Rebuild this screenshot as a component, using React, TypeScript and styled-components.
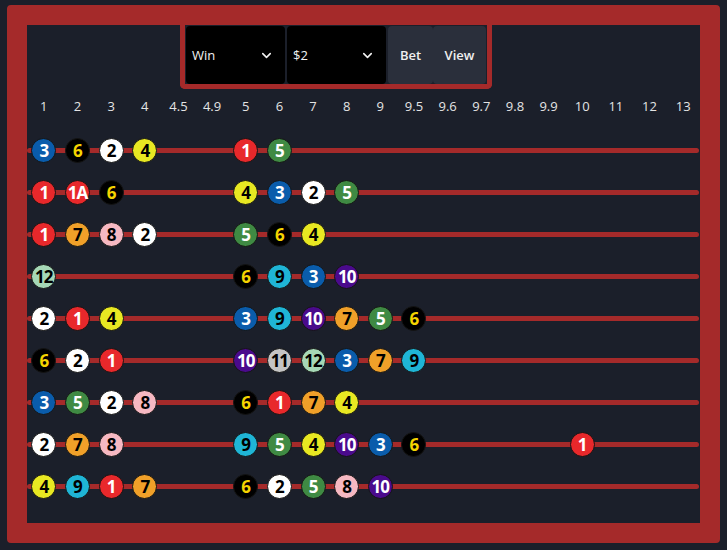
import React from 'react';
import styled, { createGlobalStyle } from 'styled-components';
import { ChevronDown } from 'lucide-react';

const GlobalStyle = createGlobalStyle`
  body {
    margin: 0;
    background: #1b1f2a;
    font-family: "Open Sans", "Noto Sans", sans-serif;
    color: #e6e6e6;
  }
`

const RED = '#a52a2a';

type BallStyle = { bg: string; fg: string };

const ballColors: Record<string, BallStyle> = {
  '1': { bg: '#e8282b', fg: '#ffffff' },
  '1A': { bg: '#e8282b', fg: '#ffffff' },
  '2': { bg: '#ffffff', fg: '#000000' },
  '3': { bg: '#0a5cab', fg: '#ffffff' },
  '4': { bg: '#e8e822', fg: '#000000' },
  '5': { bg: '#3f8a43', fg: '#ffffff' },
  '6': { bg: '#000000', fg: '#f5d400' },
  '7': { bg: '#f0a029', fg: '#000000' },
  '8': { bg: '#f6b8c2', fg: '#000000' },
  '9': { bg: '#1fb5d6', fg: '#000000' },
  '10': { bg: '#4a0a8c', fg: '#ffffff' },
  '11': { bg: '#c4c4c4', fg: '#000000' },
  '12': { bg: '#a6d8b6', fg: '#000000' },
};

const columns = ['1', '2', '3', '4', '4.5', '4.9', '5', '6', '7', '8', '9', '9.5', '9.6', '9.7', '9.8', '9.9', '10', '11', '12', '13'];

// each row: one entry per column, '' = empty slot
const rows: string[][] = [
  ['3', '6', '2', '4', '', '', '1', '5'],
  ['1', '1A', '6', '', '', '', '4', '3', '2', '5'],
  ['1', '7', '8', '2', '', '', '5', '6', '4'],
  ['12', '', '', '', '', '', '6', '9', '3', '10'],
  ['2', '1', '4', '', '', '', '3', '9', '10', '7', '5', '6'],
  ['6', '2', '1', '', '', '', '10', '11', '12', '3', '7', '9'],
  ['3', '5', '2', '8', '', '', '6', '1', '7', '4'],
  ['2', '7', '8', '', '', '', '9', '5', '4', '10', '3', '6', '', '', '', '', '1'],
  ['4', '9', '1', '7', '', '', '6', '2', '5', '8', '10'],
];

const Frame = styled.div`
  box-sizing: border-box;
  width: 713px;
  height: 538px;
  margin: 5px 0 0 7px;
  border: 20px solid ${RED};
  border-radius: 4px;
  display: flex;
  flex-direction: column;
`

const Toolbar = styled.div`
  display: flex;
  align-self: flex-start;
  margin-left: 153px;
  padding: 1px 1px 0 1px;
  border: 5px solid ${RED};
  border-top: 0;
  border-radius: 0 0 5px 5px;
`

const Select = styled.div`
  box-sizing: border-box;
  width: 99px;
  height: 58px;
  margin-right: 2px;
  padding: 0 11px 0 6px;
  background: #000;
  border-radius: 4px;
  display: flex;
  align-items: center;
  justify-content: space-between;
  font-size: 13px;
  color: #f2f2f2;
`

const Button = styled.div<{ $w: number }>`
  width: ${p => p.$w}px;
  height: 58px;
  background: #2a2f3b;
  border-radius: 4px;
  display: flex;
  align-items: center;
  justify-content: center;
  font-size: 13px;
  font-weight: 600;
  color: #f0f0f0;
`

const Grid = styled.div`
  display: grid;
  grid-template-columns: repeat(20, 1fr);
  align-items: center;
  justify-items: center;
`

const Header = styled(Grid)`
  margin-top: 7px;
  height: 20px;
  font-size: 13px;
  color: #e4e4e4;
`

const Rows = styled.div`
  margin-top: 13px;
  display: flex;
  flex-direction: column;
`

const Row = styled(Grid)`
  position: relative;
  height: 42px;

  &::before {
    content: '';
    position: absolute;
    left: 0;
    right: 1px;
    top: 19px;
    height: 5px;
    border-radius: 3px;
    background: ${RED};
  }
`

const Ball = styled.div<{ $bg: string; $fg: string }>`
  position: relative;
  box-sizing: border-box;
  width: 25px;
  height: 25px;
  border-radius: 50%;
  border: 1px solid #141414;
  background: ${p => p.$bg};
  color: ${p => p.$fg};
  display: flex;
  align-items: center;
  justify-content: center;
  font-size: 17px;
  font-weight: 700;
  letter-spacing: -1px;
  line-height: 1;
`

const Cell = styled.div`
  width: 25px;
  height: 25px;
`

export default function App() {
  return (
    <>
      <GlobalStyle />
      <Frame>
        <Toolbar>
          <Select>
            <span>Win</span>
            <ChevronDown size={15} strokeWidth={2.5} />
          </Select>
          <Select>
            <span>$2</span>
            <ChevronDown size={15} strokeWidth={2.5} />
          </Select>
          <Button $w={45}>Bet</Button>
          <Button $w={53}>View</Button>
        </Toolbar>
        <Header>
          {columns.map(c => <span key={c}>{c}</span>)}
        </Header>
        <Rows>
          {rows.map((row, i) => (
            <Row key={i}>
              {columns.map((_, j) => {
                const v = row[j];
                if (!v) return <Cell key={j} />;
                const c = ballColors[v];
                return <Ball key={j} $bg={c.bg} $fg={c.fg}>{v}</Ball>;
              })}
            </Row>
          ))}
        </Rows>
      </Frame>
    </>
  );
}
